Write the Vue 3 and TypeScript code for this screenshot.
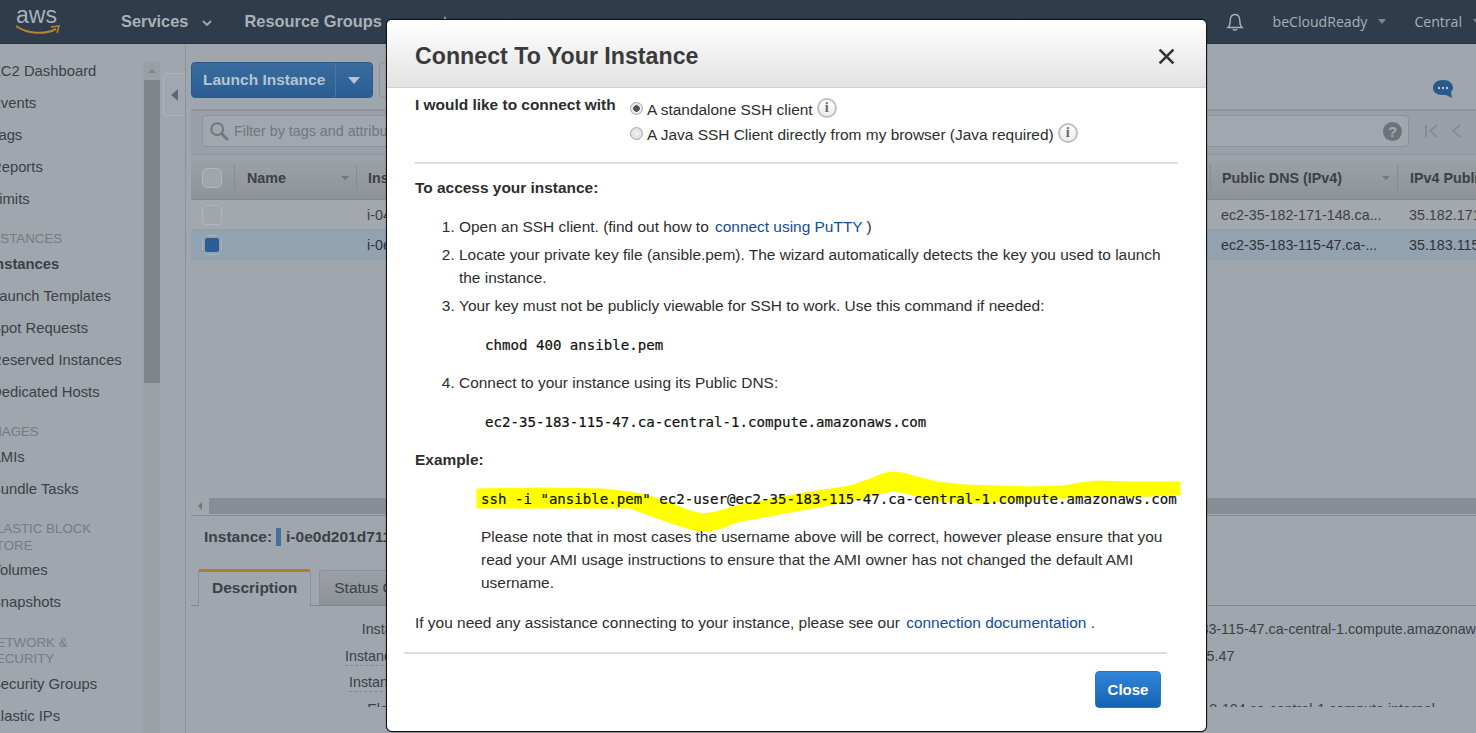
<template>
  <div class="page">
    <header class="topbar">
      <div class="logo">
        <span class="logo__text">aws</span>
        <svg class="logo__smile" viewBox="0 0 46 12" width="46" height="12">
          <path d="M1 2 C12 10 30 11 41 5" fill="none" stroke="#b9822c" stroke-width="2" />
          <path d="M36 3 L44 2 L42 9" fill="none" stroke="#b9822c" stroke-width="1.6" />
        </svg>
      </div>
      <nav class="topbar__nav">
        <span class="nav-item">Services
          <svg class="chev" viewBox="0 0 10 6" width="10" height="6"><path d="M1 1 L5 5 L9 1" fill="none" stroke="#a3aab1" stroke-width="1.8" /></svg>
        </span>
        <span class="nav-item">Resource Groups</span>
        <svg class="pin" viewBox="0 0 12 12" width="12" height="12"><path d="M6 0 L11 12 L1 12 Z" fill="#a9b0b7" /></svg>
      </nav>
      <div class="topbar__right">
        <svg class="bell" viewBox="0 0 20 20" width="20" height="20">
          <path d="M3 15.5 C5.5 13.5 5 11 5.2 8 C5.5 4.5 7.5 2.5 10 2.5 C12.5 2.5 14.5 4.5 14.8 8 C15 11 14.5 13.5 17 15.5 Z" fill="none" stroke="#aeb5bc" stroke-width="1.3" />
          <path d="M8 17 C8.6 18.6 11.4 18.6 12 17" fill="none" stroke="#aeb5bc" stroke-width="1.3" />
        </svg>
        <span class="top-link top-link--user">beCloudReady<i class="caret caret--top"></i></span>
        <span class="top-link">Central<i class="caret caret--top"></i></span>
      </div>
    </header>

    <div class="console">
      <aside class="sidebar">
        <ul class="side-list">
          <template v-for="item in sideItems" :key="item.label">
            <li :class="item.kind === 'head' ? 'side-head' : item.kind === 'active' ? 'side-item side-item--active' : 'side-item'">
              {{ item.label }}
            </li>
          </template>
        </ul>
        <div class="side-scroll">
          <div class="side-scroll__up"><i class="side-scroll__arrow"></i></div>
          <div class="side-scroll__thumb"></div>
        </div>
      </aside>

      <div class="collapse-strip">
        <div class="collapse-tab"><i class="collapse-tab__arrow"></i></div>
      </div>

      <main class="main">
        <div class="toolbar">
          <div class="launch">
            <span class="launch__label">Launch Instance</span>
            <span class="launch__drop"><i class="caret caret--white"></i></span>
          </div>
          <div class="toolbar__next"></div>
          <svg class="chat" viewBox="0 0 22 20" width="22" height="20">
            <path d="M11 1 C5 1 1 4.500 1 9 C1 13 5 16 10 16 L14 16 L20 19 L19 13 C20.500 11.500 21 10.500 21 9 C21 4.500 17 1 11 1 Z" fill="#29598a" />
            <circle cx="7" cy="9" r="1.200" fill="#b9c6d3" />
            <circle cx="11" cy="9" r="1.200" fill="#b9c6d3" />
            <circle cx="15" cy="9" r="1.200" fill="#b9c6d3" />
          </svg>
        </div>

        <div class="filter-row">
          <div class="filter">
            <svg class="filter__lens" viewBox="0 0 22 22" width="20" height="20">
              <circle cx="9" cy="9" r="6.500" fill="none" stroke="#6f767c" stroke-width="2.200" />
              <path d="M14 14 L20 20" stroke="#6f767c" stroke-width="3" stroke-linecap="round" />
            </svg>
            <span class="filter__text">Filter by tags and attributes or search by keyword</span>
            <span class="filter__help">?</span>
          </div>
          <svg class="pager" viewBox="0 0 50 16" width="50" height="16">
            <path d="M2 2 V14 M13 2 L6 8 L13 14" fill="none" stroke="#848b91" stroke-width="1.800" />
            <path d="M36 2 L29 8 L36 14" fill="none" stroke="#848b91" stroke-width="1.800" />
          </svg>
        </div>

        <div class="table">
          <div class="row row--head">
            <div class="col col--check"><i class="check"></i></div>
            <div class="col col--name">Name<i class="caret caret--sort"></i></div>
            <div class="col col--inst">Instance ID</div>
            <div class="col col--dns">Public DNS (IPv4)<i class="caret caret--sort"></i></div>
            <div class="col col--ip">IPv4 Public IP</div>
          </div>
          <div v-for="r in rows" :key="r.id" class="row" :class="{ 'row--selected': r.selected }">
            <div class="col col--check"><i class="check" :class="{ 'check--on': r.selected }"></i></div>
            <div class="col col--name"></div>
            <div class="col col--inst">{{ r.id }}</div>
            <div class="col col--dns">{{ r.dns }}</div>
            <div class="col col--ip">{{ r.ip }}</div>
          </div>
        </div>

        <div class="hscroll">
          <i class="hscroll__arrow"></i>
          <div class="hscroll__thumb"></div>
        </div>

        <div class="detail-title">
          <b>Instance:</b><i class="detail-title__mark"></i><b>i-0e0d201d711</b>
        </div>

        <div class="tabs">
          <span class="tab tab--active">Description</span>
          <span class="tab">Status Checks</span>
        </div>

        <div class="details">
          <template v-for="d in details" :key="d.label">
            <span class="details__label" :class="{ 'details__label--dash': d.dash }">{{ d.label }}</span>
            <span class="details__value">{{ d.value }}</span>
          </template>
        </div>
      </main>
    </div>

    <section class="modal">
      <svg class="marker" viewBox="470 465 720 70" width="720" height="70">
        <polygon
          fill="#ffff00"
          stroke="#ffff00"
          stroke-width="1"
          stroke-linejoin="round"
          points="477,489 540,488 603,489 630,492 650,496 670,503 690,511 703,514 716,512 740,505 770,499 803,493 830,489 850,486 870,479 885,473 893,472 903,473 917,477 937,482 965,485 997,486 1030,487 1063,486 1080,483 1097,481 1130,482 1180,482 1180,495 1120,497 1063,498 997,502 963,503 940,501 923,498 905,493 893,491 880,494 863,498 830,505 780,514 737,522 722,528 710,531 697,531 680,526 657,518 630,508 477,508"
        />
      </svg>

      <div class="modal__head">
        <h1 class="modal__title">Connect To Your Instance</h1>
        <svg class="modal__close" viewBox="0 0 16 16" width="17" height="17">
          <path d="M1.500 1.500 L14.500 14.500 M14.500 1.500 L1.500 14.500" stroke="#333" stroke-width="2.500" />
        </svg>
      </div>

      <div class="modal__body">
        <div class="choice">
          <b class="choice__label">I would like to connect with</b>
          <div class="choice__opts">
            <div class="opt">
              <i class="radio radio--on"></i>A standalone SSH client<i class="info">i</i>
            </div>
            <div class="opt">
              <i class="radio"></i>A Java SSH Client directly from my browser (Java required)<i class="info">i</i>
            </div>
          </div>
        </div>

        <p class="lead"><b>To access your instance:</b></p>
        <ol class="steps">
          <li>Open an SSH client. (find out how to <a class="link">connect using PuTTY</a> )</li>
          <li>Locate your private key file (ansible.pem). The wizard automatically detects the key you used to launch the instance.</li>
          <li>Your key must not be publicly viewable for SSH to work. Use this command if needed:
            <code class="cmd">chmod 400 ansible.pem</code>
          </li>
          <li>Connect to your instance using its Public DNS:
            <code class="cmd">ec2-35-183-115-47.ca-central-1.compute.amazonaws.com</code>
          </li>
        </ol>

        <p class="example"><b>Example:</b></p>
        <code class="example__cmd">ssh -i "ansible.pem" ec2-user@ec2-35-183-115-47.ca-central-1.compute.amazonaws.com</code>
        <p class="note">Please note that in most cases the username above will be correct, however please ensure that you read your AMI usage instructions to ensure that the AMI owner has not changed the default AMI username.</p>
        <p class="help">If you need any assistance connecting to your instance, please see our <a class="link">connection documentation</a> .</p>
      </div>

      <div class="modal__foot">
        <button class="close-btn" type="button">Close</button>
      </div>
    </section>
  </div>
</template>

<script setup lang="ts">
interface SideItem {
  label: string;
  kind?: 'head' | 'active';
}

const sideItems: SideItem[] = [
  { label: 'EC2 Dashboard' },
  { label: 'Events' },
  { label: 'Tags' },
  { label: 'Reports' },
  { label: 'Limits' },
  { label: 'INSTANCES', kind: 'head' },
  { label: 'Instances', kind: 'active' },
  { label: 'Launch Templates' },
  { label: 'Spot Requests' },
  { label: 'Reserved Instances' },
  { label: 'Dedicated Hosts' },
  { label: 'IMAGES', kind: 'head' },
  { label: 'AMIs' },
  { label: 'Bundle Tasks' },
  { label: 'ELASTIC BLOCK STORE', kind: 'head' },
  { label: 'Volumes' },
  { label: 'Snapshots' },
  { label: 'NETWORK & SECURITY', kind: 'head' },
  { label: 'Security Groups' },
  { label: 'Elastic IPs' },
];

const rows = [
  { id: 'i-04', dns: 'ec2-35-182-171-148.ca...', ip: '35.182.171.148', selected: false },
  { id: 'i-0e', dns: 'ec2-35-183-115-47.ca-...', ip: '35.183.115.47', selected: true },
];

const details = [
  { label: 'Instance ID', value: 'ec2-35-183-115-47.ca-central-1.compute.amazonaws.com', dash: false },
  { label: 'Instance state', value: '35.183.115.47', dash: true },
  { label: 'Instance type', value: '', dash: true },
  { label: 'Elastic IPs', value: 'ip-172-31-8-104.ca-central-1.compute.internal', dash: false },
];
</script>

<style>
html,
body {
  margin: 0;
  background: #9fa6ad;
}
</style>

<style scoped>
.page {
  position: relative;
  width: 1476px;
  height: 733px;
  overflow: hidden;
  background: #9fa6ad;
  color: #3c4146;
  font-family: "Liberation Sans", Arial, sans-serif;
  font-size: 14.5px;
}

/* top bar */
.topbar {
  display: flex;
  align-items: center;
  height: 44px;
  background: #2f3c4b;
  border-bottom: 1px solid #27313c;
  box-sizing: border-box;
  color: #a9b0b7;
}

.logo {
  position: relative;
  width: 121px;
  flex: none;
  height: 44px;
}

.logo__text {
  position: absolute;
  left: 16px;
  top: -1px;
  font-size: 23px;
  line-height: 32px;
  color: #a9b0b7;
}

.logo__smile {
  position: absolute;
  left: 15px;
  top: 24px;
}

.topbar__nav {
  display: flex;
  align-items: center;
  gap: 32px;
  font-weight: 700;
  font-size: 16.400px;
}

.nav-item {
  display: flex;
  align-items: center;
}

.chev {
  margin-left: 14px;
  margin-top: 3px;
}

.pin {
  margin-left: 25px;
}

.topbar__right {
  margin-left: auto;
  display: flex;
  align-items: center;
  font-size: 14.100px;
  font-family: "Open Sans", "Liberation Sans", sans-serif;
}

.bell {
  margin-right: 28px;
}

.top-link {
  display: flex;
  align-items: center;
}

.top-link--user {
  margin-right: 28px;
}

.top-link:last-child {
  margin-right: -5px;
}

.caret {
  display: inline-block;
  width: 0;
  height: 0;
  border-left: 4px solid transparent;
  border-right: 4px solid transparent;
  border-top: 5px solid #7f868d;
}

.caret--top {
  margin-left: 11px;
}

/* console */
.console {
  display: flex;
  height: 689px;
}

.sidebar {
  display: flex;
  width: 160px;
  flex: none;
  overflow: hidden;
}

.side-list {
  list-style: none;
  width: 144px;
  flex: none;
  margin: 10.600px 0 0 -9px;
  padding: 0;
  box-sizing: border-box;
  font-size: 14.800px;
}

.side-item {
  height: 32px;
  line-height: 32px;
  white-space: nowrap;
}

.side-item--active {
  font-weight: 700;
}

.side-head {
  color: #757c82;
  font-size: 13.300px;
  line-height: 16.500px;
  margin-left: -4px;
  padding: 16.600px 20px 0 0;
}

.side-scroll {
  width: 18px;
  flex: none;
  margin: 18px 0 0 8px;
  background: #99a0a6;
}

.side-scroll__up {
  display: flex;
  justify-content: center;
  padding-top: 7px;
  height: 18px;
  box-sizing: border-box;
}

.side-scroll__arrow {
  width: 0;
  height: 0;
  border-left: 4px solid transparent;
  border-right: 4px solid transparent;
  border-bottom: 4px solid #7c8389;
}

.side-scroll__thumb {
  height: 303px;
  width: 16px;
  margin-left: 1px;
  background: #7f868b;
}

.collapse-strip {
  width: 25px;
  flex: none;
  border-right: 1px solid #8d9399;
  padding-top: 29px;
}

.collapse-tab {
  display: flex;
  align-items: center;
  justify-content: center;
  height: 43px;
  margin-left: 3px;
  border: 1px solid #acb2b8;
  border-right: 0;
  border-radius: 4px 0 0 4px;
  background: #a0a7ae;
  box-sizing: border-box;
}

.collapse-tab__arrow {
  border-top: 6px solid transparent;
  border-bottom: 6px solid transparent;
  border-right: 7px solid #62686e;
}

.main {
  flex: 1;
  min-width: 0;
  padding-left: 5px;
  overflow: hidden;
}

.toolbar {
  display: flex;
  align-items: flex-start;
  height: 65px;
  padding-top: 18px;
  box-sizing: border-box;
  position: relative;
}

.launch {
  display: flex;
  height: 36px;
  width: 182px;
  flex: none;
  border-radius: 4px;
  border: 1px solid #2a5a8b;
  box-sizing: border-box;
  background: linear-gradient(#3a6c9f, #2a5d92);
  color: #b6c4d2;
  font-weight: 700;
  font-size: 15.500px;
  line-height: 34px;
}

.launch__label {
  flex: 1;
  padding-left: 11px;
  white-space: nowrap;
}

.launch__drop {
  display: flex;
  align-items: center;
  justify-content: center;
  width: 36px;
  border-left: 1px solid #4a78a5;
}

.caret--white {
  border-left-width: 6px;
  border-right-width: 6px;
  border-top: 7px solid #b6c4d2;
}

.toolbar__next {
  width: 20px;
  height: 36px;
  margin-left: 6px;
  border: 1px solid #8d9399;
  border-radius: 4px;
  box-sizing: border-box;
}

.chat {
  margin-left: auto;
  margin-right: 22px;
  margin-top: 17px;
}

.filter-row {
  display: flex;
  align-items: center;
  height: 45px;
  background: #999fa6;
  border-top: 2px solid #8f969c;
  box-sizing: border-box;
  padding: 0 0 3px 11px;
}

.filter {
  display: flex;
  align-items: center;
  width: 1207px;
  height: 32px;
  flex: none;
  border: 1px solid #8c9298;
  border-radius: 4px;
  background: #a0a7ae;
  box-sizing: border-box;
  padding: 0 6px 0 6px;
  color: #71787e;
}

.filter__text {
  margin-left: 5px;
  font-size: 14.300px;
}

.filter__help {
  margin-left: auto;
  width: 19px;
  height: 19px;
  border-radius: 50%;
  background: #6d7379;
  color: #a3aab0;
  font-weight: 700;
  font-size: 15px;
  line-height: 19px;
  text-align: center;
}

.pager {
  margin-left: 15px;
}

.table {
  font-size: 14.300px;
}

.row {
  display: flex;
  align-items: center;
  height: 30px;
  background: #a2a8ae;
  border-bottom: 1px solid #979da3;
  box-sizing: border-box;
  white-space: nowrap;
}

.row--head {
  height: 46px;
  padding-top: 1px;
  background: linear-gradient(#9ca3a9, #8d9399);
  border-top: 1px solid #8f959b;
  border-bottom: 1px solid #82888e;
  font-weight: 700;
  font-size: 14.300px;
}

.row--selected {
  background: #93a2b1;
  color: #2e3338;
}

.col {
  display: flex;
  align-items: center;
  box-sizing: border-box;
  height: 100%;
  flex: none;
  overflow: hidden;
}

.row--head .col {
  height: 26px;
}

.col--check {
  width: 43px;
  padding-left: 11px;
}

.col--name {
  width: 122px;
  padding-left: 12px;
}

.col--inst {
  width: 854px;
  padding-left: 11px;
}

.col--dns {
  width: 187px;
  padding-left: 11px;
}

.col--ip {
  width: 100px;
  padding-left: 12px;
}

.row--head .col--name,
.row--head .col--inst,
.row--head .col--dns,
.row--head .col--ip {
  border-left: 1px solid #868c92;
}

.row--head .caret--sort {
  margin-left: auto;
  margin-right: 7px;
}

.caret--sort {
  border-top-color: #71777d;
  border-top-width: 4px;
}

.check {
  display: block;
  width: 20px;
  height: 20px;
  border: 1px solid #b0b6bb;
  border-radius: 5px;
  box-sizing: border-box;
  background: #a0a6ac;
}

.check--on {
  border: 1px solid #aeb6bd;
  background: #2a5f96;
  box-shadow: inset 0 0 0 2px #93a2b1;
}

.hscroll {
  display: flex;
  align-items: center;
  height: 18px;
  margin-top: 237px;
  border-bottom: 1px solid #878d93;
  background: #a1a7ad;
}

.hscroll__arrow {
  margin-left: 7px;
  border-top: 4px solid transparent;
  border-bottom: 4px solid transparent;
  border-right: 4px solid #71777d;
}

.hscroll__thumb {
  flex: 1;
  height: 16px;
  margin-left: 7px;
  background: #878e95;
}

.detail-title {
  display: flex;
  align-items: center;
  height: 20px;
  margin-top: 11px;
  padding-left: 13px;
  font-size: 15.500px;
  white-space: nowrap;
}

.detail-title__mark {
  width: 5px;
  height: 18px;
  margin: 0 5px 0 4px;
  background: #437099;
}

.tabs {
  display: flex;
  align-items: flex-end;
  height: 37px;
  margin-top: 22px;
  border-bottom: 1px solid #81878d;
  box-sizing: border-box;
  padding-left: 7px;
  gap: 8px;
  white-space: nowrap;
  font-size: 15.500px;
}

.tab {
  height: 35px;
  line-height: 33px;
  padding: 0 14px;
  border: 1px solid #8b9197;
  border-bottom: 0;
  border-radius: 3px 3px 0 0;
  box-sizing: border-box;
  background: linear-gradient(#9aa0a6, #8d9399);
}

.tab--active {
  height: 37px;
  margin-bottom: -1px;
  padding: 0 13px;
  background: #9fa6ad;
  border-top: 3px solid #ac7e2c;
  font-weight: 700;
  line-height: 32px;
}

.details {
  display: grid;
  grid-template-columns: 243px auto;
  column-gap: 710px;
  grid-auto-rows: 26.500px;
  height: 91px;
  overflow: hidden;
  margin-top: 10px;
  font-size: 14.300px;
  line-height: 26px;
  white-space: nowrap;
}

.details__label {
  justify-self: end;
  height: 23px;
  box-sizing: border-box;
}

.details__label--dash {
  border-bottom: 1px dashed #84898f;
}

/* modal */
.modal {
  position: absolute;
  left: 386px;
  top: 19px;
  width: 821px;
  height: 713px;
  box-sizing: border-box;
  background: #fff;
  border: 1px solid #111;
  border-radius: 6px;
  color: #2d2d2d;
  font-size: 15.450px;
  box-shadow: 0 0 1px #000;
}

.marker {
  position: absolute;
  left: 83px;
  top: 445px;
}

.modal__head {
  position: relative;
  display: flex;
  align-items: center;
  justify-content: space-between;
  height: 68px;
  padding: 5px 31px 0 28px;
  box-sizing: border-box;
  background: linear-gradient(#fff, #e2e2e2);
  border-bottom: 1px solid #d3d3d3;
  border-radius: 5px 5px 0 0;
}

.modal__title {
  margin: 0;
  font-size: 23.200px;
  font-weight: 700;
  color: #3a3a3a;
}

.modal__body {
  position: relative;
  padding: 0 28px;
}

.choice {
  display: flex;
  height: 74px;
  border-bottom: 2px solid #dcdcdc;
}

.choice__label {
  width: 215px;
  flex: none;
  line-height: 33px;
}

.choice__opts {
  padding-top: 9px;
}

.opt {
  display: flex;
  align-items: center;
  height: 25px;
  white-space: nowrap;
}

.radio {
  width: 13px;
  height: 13px;
  margin-right: 4px;
  margin-top: -2px;
  border: 1px solid #a8a8a8;
  border-radius: 50%;
  box-sizing: border-box;
  background: radial-gradient(#f4f4f4, #d4d4d4);
}

.radio--on {
  background: radial-gradient(#555 0 3px, #e8e8e8 3.600px);
}

.info {
  width: 20px;
  height: 20px;
  margin: -3px 0 0 4px;
  border: 2px solid #c0c0c0;
  border-radius: 50%;
  box-sizing: border-box;
  background: linear-gradient(#fff, #ececec);
  color: #666;
  font-style: normal;
  font-weight: 700;
  font-family: "Liberation Serif", serif;
  font-size: 14px;
  line-height: 16px;
  text-align: center;
}

.lead {
  margin: 12px 0 0;
  line-height: 23px;
}

.steps {
  margin: 16px 0 0;
  padding: 0 0 0 44px;
  line-height: 23px;
}

.steps li {
  margin-bottom: 5px;
}

.steps li:nth-child(3),
.steps li:nth-child(4) {
  margin-bottom: 4px;
}

.cmd,
.example__cmd {
  font-family: "DejaVu Sans Mono", "Liberation Mono", monospace;
  font-size: 14.100px;
  color: #111;
  -webkit-text-stroke: 0.2px #111;
}

.cmd {
  display: block;
  margin: 17px 0 14px 26px;
}

.example {
  margin: 11px 0 0;
  line-height: 23px;
}

.example__cmd {
  display: block;
  margin: 17px 0 0 66px;
  line-height: 23px;
  white-space: nowrap;
}

.note {
  margin: 14px 10px 0 66px;
  line-height: 23px;
}

.help {
  margin: 17px 0 0;
  line-height: 23px;
}

.link {
  color: #0f4c9a;
  padding-left: 2px;
}

.modal__foot {
  position: relative;
  display: flex;
  justify-content: flex-end;
  margin: 18px 39px 0 17px;
  border-top: 2px solid #dcdcdc;
  padding-top: 17px;
  padding-right: 6px;
}

.close-btn {
  width: 66px;
  height: 37px;
  border: 1px solid #2a76c6;
  border-radius: 4px;
  background: linear-gradient(#2f86da, #1563b3);
  color: #fff;
  font-family: inherit;
  font-weight: 700;
  font-size: 15px;
  padding: 0;
}
</style>
